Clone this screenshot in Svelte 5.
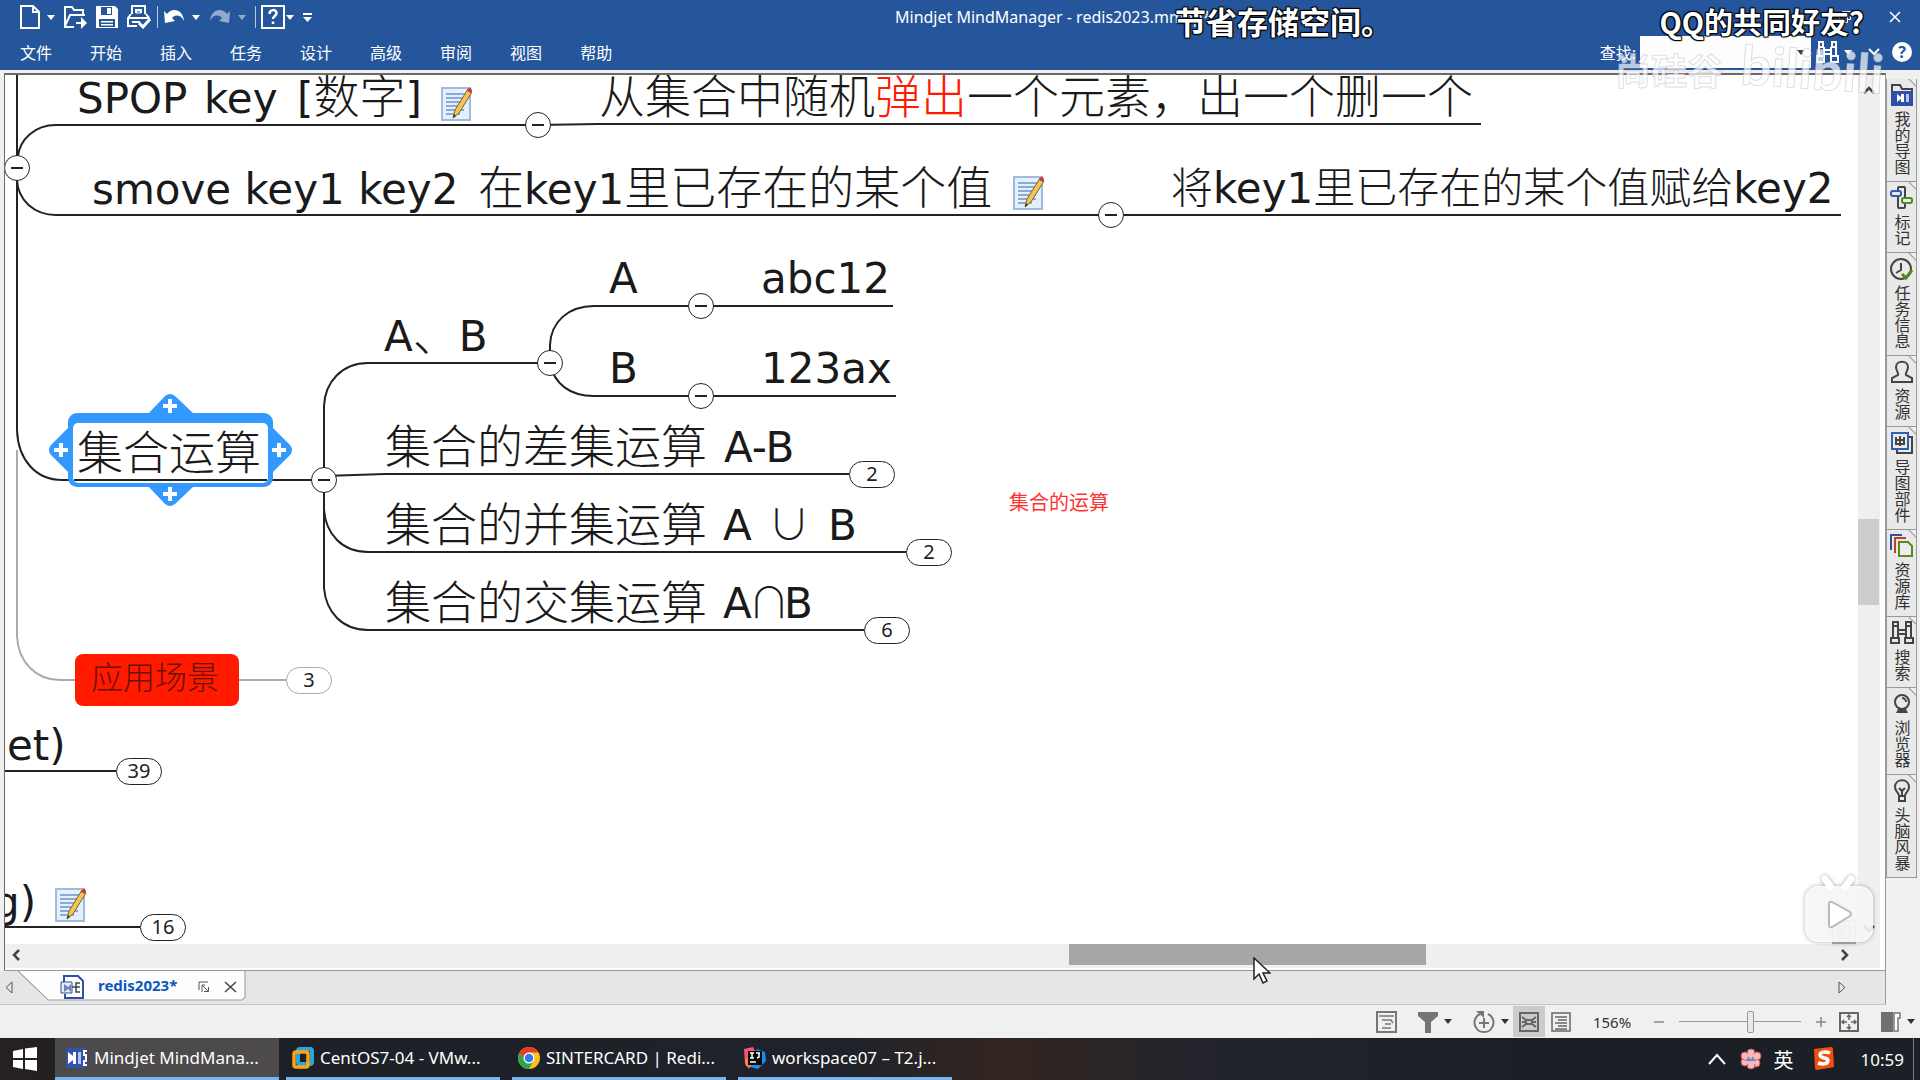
<script>
  const menus = ['文件', '开始', '插入', '任务', '设计', '高级', '审阅', '视图', '帮助'];

  const texts = [
    { x: 77, y: 113, t: 'SPOP' },
    { x: 204, y: 113, t: 'key' },
    { x: 297, y: 113, t: '[数字]' },
    { x: 599, y: 113, t: '从集合中随机' },
    { x: 875, y: 113, t: '弹出', red: true },
    { x: 967, y: 113, t: '一个元素，出一个删一个' },
    { x: 92, y: 204, t: 'smove key1 key2' },
    { x: 478, y: 204, t: '在key1里已存在的某个值' },
    { x: 1171, y: 203, t: '将key1里已存在的某个值赋给key2', small: true },
    { x: 609, y: 293, t: 'A' },
    { x: 761, y: 293, t: 'abc12' },
    { x: 384, y: 351, t: 'A、B' },
    { x: 609, y: 383, t: 'B' },
    { x: 761, y: 383, t: '123ax' },
    { x: 385, y: 463, t: '集合的差集运算' },
    { x: 724, y: 462, t: 'A-B' },
    { x: 385, y: 541, t: '集合的并集运算' },
    { x: 723, y: 540, t: 'A' },
    { x: 768, y: 540, t: '∪', small: true },
    { x: 828, y: 540, t: 'B' },
    { x: 385, y: 619, t: '集合的交集运算' },
    { x: 723, y: 618, t: 'A' },
    { x: 748, y: 618, t: '∩', small: true },
    { x: 784, y: 618, t: 'B' },
    { x: 77, y: 469, t: '集合运算' },
    { x: 7, y: 760, t: 'et)' },
    { x: -7, y: 917, t: 'g)' }
  ];

  const toggles = [
    [538, 125], [17, 168], [1111, 215], [701, 306], [550, 363], [701, 396], [324, 480]
  ];
  const pills = [
    { x: 849, y: 461, n: 2 },
    { x: 906, y: 539, n: 2 },
    { x: 864, y: 617, n: 6 },
    { x: 286, y: 667, n: 3, pale: true },
    { x: 116, y: 758, n: 39 },
    { x: 140, y: 914, n: 16 }
  ];
  const notes = [[441, 87], [1013, 176], [55, 888]];

  const panels = [
    { icon: 'folder', t: '我的导图' },
    { icon: 'marker', t: '标记' },
    { icon: 'clock', t: '任务信息' },
    { icon: 'person', t: '资源' },
    { icon: 'parts', t: '导图部件' },
    { icon: 'library', t: '资源库' },
    { icon: 'search', t: '搜索' },
    { icon: 'globe', t: '浏览器' },
    { icon: 'bulb', t: '头脑风暴' }
  ];

  const tasks = [
    { icon: 'mm', t: 'Mindjet MindMana...', active: true },
    { icon: 'vm', t: 'CentOS7-04 - VMw...' },
    { icon: 'chrome', t: 'SINTERCARD | Redi...' },
    { icon: 'ij', t: 'workspace07 – T2.j...' }
  ];

  // Latin and CJK runs use different sizes, so each string is split into runs.
  const runs = (s) =>
    (s.match(/[∪∩\u2E80-\u9FFF\uFF00-\uFFEF]+|[^∪∩\u2E80-\u9FFF\uFF00-\uFFEF]+/g) || []).map((t) => ({
      t,
      cjk: /[∪∩\u2E80-\u9FFF\uFF00-\uFFEF]/.test(t)
    }));

  let zoom = $state(59);
  let query = $state('');
</script>

{#snippet caret()}
  <svg width="8" height="5" viewBox="0 0 8 5" aria-hidden="true"><path d="M0 0h8L4 5z" fill="currentColor" /></svg>
{/snippet}

<div class="app">
  <header class="ribbon">
    <div class="title-row">
      <div class="toolbar">
        <button class="w26" aria-label="新建"><svg width="22" height="24" viewBox="0 0 22 24"><path d="M2 1h12l6 6v16H2zM14 1v6h6" fill="none" stroke="#fff" stroke-width="2" /></svg></button>
        <button class="w16" aria-label="新建选项">{@render caret()}</button>
        <button class="w32" aria-label="打开"><svg width="24" height="24" viewBox="0 0 24 24" fill="none" stroke="#fff" stroke-width="2"><path d="M11 22H2V2h7l2 3h9v5M2 21l5-11h15M13 18h7" /><path d="M18 12l6 6-6 6z" fill="#fff" stroke="none" /></svg></button>
        <button class="w32" aria-label="保存"><svg width="24" height="24" viewBox="0 0 24 24"><path d="M1 1h19l3 3v19H1z" fill="#fff" /><path d="M6 2h11v8H6zM4 14h16v8H4z" fill="#25569c" /><path d="M12 3h4v6h-4zM6 16h12v1.500H6zM6 19h12v1.500H6z" fill="#fff" /></svg></button>
        <button class="w32" aria-label="打印"><svg width="24" height="24" viewBox="0 0 24 24" fill="none" stroke="#fff" stroke-width="2"><path d="M5 9V1h13v8M9 8V5h5v3M4 9L1 13v8h9M19 9l3 4v2M1 13h21M5 17h8" /><path d="M9 5h5v4H9z" fill="#fff" fill-opacity=".5" stroke="none" /><path d="M12 18l4 4 7-8" stroke-width="3" /></svg></button>
        <span class="sep w5"></span>
        <button class="w28" aria-label="撤销"><svg width="22" height="18" viewBox="0 0 22 18"><path d="M1 3l3 3c5-7 16-5 17 7-3-6-8-7-12-3l3 3-10 2z" fill="#fff" /></svg></button>
        <button class="w16" aria-label="撤销选项">{@render caret()}</button>
        <button class="w32 dim" aria-label="恢复"><svg width="22" height="18" viewBox="0 0 22 18"><path d="M21 3l-3 3C13-1 2 1 1 13c3-6 8-7 12-3l-3 3 10 2z" fill="#fff" /></svg></button>
        <button class="w12 dim" aria-label="恢复选项">{@render caret()}</button>
        <span class="sep w14"></span>
        <button class="w22" aria-label="帮助"><svg width="24" height="24" viewBox="0 0 24 24" fill="none" stroke="#fff" stroke-width="2"><path d="M1 1h22v22H1z" /><path d="M8.500 9c0-5 7-5 7-1 0 3-3.500 3-3.500 6M12 16.500v2.500" stroke-width="2.500" /></svg></button>
        <button class="w12" aria-label="帮助选项">{@render caret()}</button>
        <button class="w22" aria-label="自定义"><svg width="9" height="9" viewBox="0 0 9 9"><path d="M0 0h9v2H0zM0 4h9L4.500 9z" fill="#fff" /></svg></button>
      </div>
      <div class="title">Mindjet MindManager - redis2023.mmap*</div>
      <div class="win-buttons">
        <button aria-label="还原"><svg width="12" height="12" viewBox="0 0 12 12" fill="none" stroke="#fff"><path d="M.5 3.500h8v8h-8zM3.500 3V.5h8v8H9" /></svg></button>
        <button aria-label="关闭"><svg width="12" height="12" viewBox="0 0 12 12" stroke="#fff" stroke-width="1.500"><path d="M1 1l10 10M11 1L1 11" /></svg></button>
      </div>
    </div>
    <div class="menu-row">
      <nav>
        {#each menus as m}<button>{m}</button>{/each}
      </nav>
      <div class="find">
        <label for="find">查找:</label>
        <div class="find-box">
          <input id="find" type="text" bind:value={query} />
          <button aria-label="查找历史">{@render caret()}</button>
        </div>
        <button class="w26" aria-label="查找"><svg width="23" height="22" viewBox="0 0 23 22" fill="none" stroke="#fff" stroke-width="2"><path d="M3 1h4v5H3zM16 1h4v5h-4zM3 6v9M8 6v9M15 6v9M20 6v9M8 9h7M8 13h7M1 15h7v6H1zM15 15h7v6h-7z" /></svg></button>
        <button class="w16" aria-label="查找选项">{@render caret()}</button>
        <button class="w36" aria-label="折叠功能区"><svg width="12" height="8" viewBox="0 0 12 8"><path d="M1 1l5 5 5-5" fill="none" stroke="#fff" stroke-width="2" /></svg></button>
        <button class="help" aria-label="联机帮助">?</button>
      </div>
    </div>
  </header>

  <div class="body">
    <main class="workspace">
      <div class="canvas">
        <div class="map">
          <svg class="drawing" width="1900" height="980" viewBox="0 0 1900 980">
            <g class="wire">
              <path d="M17 70V156" stroke-width="3" />
              <path d="M18 156C20 140 34 125 56 125H538L598 124H1481" />
              <path d="M17 180C18 200 34 215 56 215H1841" />
              <path class="pale" d="M17 450V636C18 662 36 680 60 680H286" />
              <path d="M17 180V430C18 460 36 480 62 480H324" />
              <path d="M324 480V406C325 382 342 363 368 363H550" />
              <path d="M324 476L385 474H849" />
              <path d="M324 492V510C326 534 342 552 368 552H906" />
              <path d="M324 492V588C326 612 342 630 368 630H864" />
              <path d="M550 363V345C551 322 568 306 594 306H893" />
              <path d="M550 363C554 384 570 396 594 396H896" />
              <path d="M0 771H116M0 927H140" />
            </g>
            <g class="selection">
              <path d="M148 414L165 396Q170 392 175 396L194 414zM148 486L165 504Q170 508 175 504L194 486zM69 427L51 445Q47 450 51 455L69 473zM272 427L290 445Q294 450 290 455L272 473z" />
              <rect x="68" y="413" width="205" height="74" rx="9" />
              <rect x="73" y="423" width="195" height="60" rx="5" class="inner" />
              <path class="plus" d="M163 406h14M170 399v14M163 494h14M170 487v14M54 450h14M61 443v14M272 450h14M279 443v14" />
              <path class="base" d="M74 480H267" />
            </g>
            <rect x="75" y="654" width="164" height="52" rx="8" class="alert" />
            <text x="91" y="689" class="scene">应用场景</text>
            {#each texts as n}
              <text x={n.x} y={n.y} class:red={n.red} class:small={n.small}>{#each runs(n.t) as r}<tspan class:cjk={r.cjk}>{r.t}</tspan>{/each}</text>
            {/each}
            <text x="1009" y="510" class="caption">集合的运算</text>
            {#each notes as [x, y]}
              <g transform="translate({x} {y})">
                <rect x="1" y="1" width="28" height="32" fill="#e4f0fc" stroke="#9fbbe0" stroke-width="2" />
                <path d="M5 7h20M5 11h20M5 15h18M5 19h18M5 23h18M5 27h14" stroke="#6d93c8" stroke-width="1.500" />
                <path d="M12 31l2-8L27 2l4 3-13 21z" fill="#f3c552" stroke="#7b6232" />
                <path d="M27 2q2-3 4 1l-1 3-4-2z" fill="#c93a3a" />
                <path d="M12 31l1-4 2 2z" fill="#333" />
              </g>
            {/each}
          </svg>
          {#each toggles as [x, y]}
            <button class="toggle" style="left:{x}px;top:{y}px" aria-label="折叠"></button>
          {/each}
          {#each pills as p}
            <button class="pill" class:pale={p.pale} style="left:{p.x}px;top:{p.y}px">{p.n}</button>
          {/each}
        </div>
      </div>
      <div class="vscroll">
        <button aria-label="向上"><svg width="12" height="8" viewBox="0 0 12 8"><path d="M1 7l5-5 5 5" /></svg></button>
        <span class="v-before"></span><span class="v-thumb"></span><span class="v-after"></span>
        <button aria-label="向下"><svg width="12" height="8" viewBox="0 0 12 8"><path d="M1 1l5 5 5-5" /></svg></button>
      </div>
      <div class="hscroll">
        <button aria-label="向左"><svg width="8" height="12" viewBox="0 0 8 12"><path d="M7 1L2 6l5 5" /></svg></button>
        <span class="h-before"></span><span class="h-thumb"></span><span class="h-after"></span>
        <button aria-label="向右"><svg width="8" height="12" viewBox="0 0 8 12"><path d="M1 1l5 5-5 5" /></svg></button>
      </div>
    </main>

    <aside>
      {#each panels as p}
        <button class="panel">
          <svg width="24" height="24" viewBox="0 0 24 24" fill="none" stroke="#444" stroke-width="2">
            {#if p.icon === 'folder'}
              <path d="M2 22V2h8l2 4h10v16z" /><path d="M2 9h20v13H2z" fill="#2f4fa8" stroke="#2f4fa8" /><path d="M7 11l4 3v-3h3v8h-3v-3l-4 3z" fill="#fff" stroke="none" /><path d="M16 11h3v8h-3z" fill="#b9c4e6" stroke="none" />
            {:else if p.icon === 'marker'}
              <rect x="8" y="1" width="7" height="21" rx="1" /><rect x="1" y="5" width="10" height="5" rx="2" stroke="#2f5fb3" fill="#ececec" /><rect x="12" y="12" width="10" height="5" rx="2" stroke="#4b8a1c" fill="#ececec" />
            {:else if p.icon === 'clock'}
              <circle cx="11" cy="12" r="10" /><path d="M11 6v7l-5 3" /><path d="M12 17l4 4 6-8" stroke="#4b8a1c" stroke-width="3" />
            {:else if p.icon === 'person'}
              <path d="M2 22v-4l6-3c1-2-2-4-2-8 0-7 12-7 12 0 0 4-3 6-2 8l6 3v4z" />
            {:else if p.icon === 'parts'}
              <path d="M18 6h4v16H7v-4" /><path d="M2 2h16v16H2z" stroke="#2f5fb3" /><path d="M10 5v10M6 6v7h8V6M6 9h8" />
            {:else if p.icon === 'library'}
              <path d="M1 16V1h11" stroke="#2f4fa8" /><path d="M5 19V4h11" stroke="#c8401f" /><path d="M9 8h9l4 4v10H9z" stroke="#5a8a1c" fill="#ececec" />
            {:else if p.icon === 'search'}
              <path d="M3 1h5v4H3zM16 1h5v4h-5zM3 5v12M8 5v12M16 5v12M21 5v12M8 9h8M8 13h8M1 17h8v5H1zM15 17h8v5h-8z" />
            {:else if p.icon === 'globe'}
              <circle cx="12" cy="10" r="7" /><path d="M12 6a4 4 0 0 1 4 4" /><path d="M8 17h8l2 4H6z" fill="#444" stroke="none" />
            {:else}
              <path d="M9 17c0-4-4-4-4-9 0-9 14-9 14 0 0 5-4 5-4 9zM9 17v5h6v-5M9 9l3 3 3-3M12 12v5" />
            {/if}
          </svg>
          <span>{p.t}</span>
        </button>
      {/each}
    </aside>

    <div class="doc-tabs">
      <button class="step" aria-label="上一个"><svg width="8" height="13" viewBox="0 0 8 13"><path d="M7 1v11L1 6.500z" fill="none" stroke="#555" /></svg></button>
      <div class="doc-tab">
        <svg class="doc-shape" viewBox="0 0 226 32" preserveAspectRatio="none" aria-hidden="true"><path d="M0 0L30 30H222L225 27V0" fill="#fdfdfd" stroke="#999" /></svg>
        <svg class="doc-icon" width="24" height="24" viewBox="0 0 24 24" fill="none"><path d="M4 17V1h14l5 5v17H5v-4" stroke="#2f4fa8" stroke-width="2" fill="#fff" /><path d="M1 7h11v11H1z" fill="#e6ebf8" stroke="#2f4fa8" /><path d="M4 9l4 3 3-3v8l-3-3-4 3z" fill="#7181b5" /><path d="M12 12h4M20 8h-4v9h4M16 12h4" stroke="#444" stroke-width="1.500" /></svg>
        <b>redis2023*</b>
        <button aria-label="还原窗口"><svg width="12" height="12" viewBox="0 0 12 12" fill="none" stroke="#555"><path d="M1 9V1h9M4 11V4h3M5 5l5 5M10.500 6v4.500H6" /></svg></button>
        <button aria-label="关闭文档"><svg width="13" height="12" viewBox="0 0 13 12" stroke="#444" stroke-width="1.500"><path d="M1 1l11 10M12 1L1 11" /></svg></button>
      </div>
      <button class="step last" aria-label="下一个"><svg width="8" height="13" viewBox="0 0 8 13"><path d="M1 1v11l6-5.500z" fill="none" stroke="#555" /></svg></button>
    </div>
  </div>

  <footer class="status">
    <button class="w36 summary" aria-label="摘要"><svg width="21" height="22" viewBox="0 0 21 22" fill="none" stroke="#777" stroke-width="2"><path d="M1 1h19v20H1z" /><path d="M3 5h15M6 9h9l2 3M9 13h6M6 17h9" stroke-width="1.500" /></svg></button>
    <button class="w44" aria-label="筛选"><svg width="20" height="22" viewBox="0 0 20 22"><path d="M0 1h20v4l-7 6v11H7V11L0 5z" fill="#757575" /></svg>{@render caret()}</button>
    <button class="w44 grow" aria-label="展开"><svg width="22" height="24" viewBox="0 0 22 24" fill="none" stroke="#757575" stroke-width="2"><path d="M7 4a9.500 9.500 0 1 0 8 0M11 8v10M6 13h10" /><path d="M3 1h8v7z" fill="#757575" stroke="none" /></svg>{@render caret()}</button>
    <button class="w32 on" aria-label="导图视图"><svg width="20" height="20" viewBox="0 0 20 20" fill="none" stroke="#666" stroke-width="2"><path d="M1 1h18v18H1zM3 5l4 3h6l4-3M3 15l4-3h6l4 3M3 10h3M14 10h3M7 8v4M13 8v4" /></svg></button>
    <button class="w32" aria-label="大纲视图"><svg width="20" height="20" viewBox="0 0 20 20" fill="none" stroke="#666" stroke-width="1.500"><path d="M1 1h18v18H1zM4 5h12M7 8h9M4 11h12M7 14h9M4 17h12" /></svg></button>
    <span class="percent">156%</span>
    <button class="w24" aria-label="缩小"><svg width="10" height="10" viewBox="0 0 10 10"><path d="M0 5h10" stroke="#888" stroke-width="1.500" /></svg></button>
    <input type="range" aria-label="缩放" min="0" max="100" bind:value={zoom} />
    <button class="w24" aria-label="放大"><svg width="10" height="10" viewBox="0 0 10 10"><path d="M0 5h10M5 0v10" stroke="#888" stroke-width="1.500" /></svg></button>
    <button class="w32" aria-label="适合窗口"><svg width="20" height="20" viewBox="0 0 20 20" fill="none" stroke="#666" stroke-width="2"><path d="M1 1h18v18H1z" /><path d="M10 3v5M10 12v5M3 10h5M12 10h5M8 5l2-2 2 2M8 15l2 2 2-2M5 8l-2 2 2 2M15 8l2 2-2 2" stroke-width="1.500" /></svg></button>
    <button class="w44 pane" aria-label="任务窗格"><svg width="20" height="20" viewBox="0 0 20 20"><path d="M0 0h12v20H0z" fill="#707070" /><path d="M13 1h6v5h-2v13h-4z" fill="#fff" stroke="#777" stroke-width="1.500" /></svg>{@render caret()}</button>
  </footer>

  <div class="taskbar">
    <button class="start" aria-label="开始"><svg width="24" height="24" viewBox="0 0 24 24" fill="#fff"><path d="M0 4l10-2v9H0zM12 1.500L24 0v11H12zM0 13h10v9L0 20zM12 13h12v11l-12-2z" /></svg></button>
    {#each tasks as k}
      <button class="task" class:active={k.active}>
        <svg width="24" height="24" viewBox="0 0 24 24">
          {#if k.icon === 'mm'}
            <path d="M1 2h20v20H1z" fill="#3551a8" /><path d="M3 6l5 4V6h3v12H8v-4l-5 4z" fill="#fff" /><path d="M13 6h3v12h-3z" fill="#b7c4ea" /><path d="M22 5h-3v4h2v6h-2v4h3" fill="none" stroke="#fff" stroke-width="2" />
          {:else if k.icon === 'vm'}
            <rect x="7" y="3" width="14" height="15" rx="2" fill="none" stroke="#2ba6d8" stroke-width="4" /><rect x="3" y="6" width="14" height="15" rx="2" fill="none" stroke="#f9a51b" stroke-width="3.500" />
          {:else if k.icon === 'chrome'}
            <circle cx="12" cy="12" r="11" fill="#fbc116" /><path d="M2.500 6.500A11 11 0 0 1 21.500 6.500H12L7.500 14z" fill="#e33b2e" /><path d="M2.500 6.500A11 11 0 0 0 12 23l4.500-8.500H7.500z" fill="#2da44e" /><circle cx="12" cy="12" r="5.500" fill="#fff" /><circle cx="12" cy="12" r="4.300" fill="#2f7de9" />
          {:else}
            <path d="M1 3l9-2 4 8-8 14-4-5z" fill="#fb4f7d" /><path d="M14 3l8 3 1 9-8 8-8-2z" fill="#1c8bf0" /><path d="M2 14l5-4 1 11-5-1z" fill="#f7902a" /><rect x="5" y="5" width="14" height="14" fill="#0a0a0a" /><path d="M7 7h4M9 7v5M7 12h4M13 7h4M16 7v4l-2 1M7 16h6" fill="none" stroke="#fff" stroke-width="1.500" />
          {/if}
        </svg>
        <span>{k.t}</span>
      </button>
    {/each}
    <div class="tray">
      <svg width="18" height="12" viewBox="0 0 18 12"><path d="M1 11l8-9 8 9" fill="none" stroke="#fff" stroke-width="2" /></svg>
      <svg class="flower" width="22" height="22" viewBox="0 0 22 22"><g fill="#f7b9b9" stroke="#cf4f55"><circle cx="11" cy="5" r="4" /><circle cx="17" cy="8" r="4" /><circle cx="16" cy="15" r="4" /><circle cx="11" cy="17" r="4" /><circle cx="5" cy="14" r="4" /><circle cx="5" cy="8" r="4" /></g><circle cx="11" cy="11" r="6" fill="#f7b9b9" /><path d="M6 12h10M8 9l2 4M13 9l-1 4" stroke="#6c8fc0" stroke-width="2" /></svg>
      <span class="ime">英</span>
      <svg class="sogou" width="24" height="26" viewBox="0 0 24 26"><path d="M2 3l17-2q2 0 2 2l1 18-17 3q-2 0-2-2z" fill="#f0500f" /><path d="M18 7c-5-2-10-1-10 2 0 4 9 2 8 6-1 4-7 3-10 2" fill="none" stroke="#fff" stroke-width="3.500" /></svg>
      <time>10:59</time>
      <span class="peek"></span>
    </div>
  </div>

  <p class="danmaku one">节省存储空间。</p>
  <p class="danmaku two">QQ的共同好友?</p>
  <div class="mark"><span class="school">尚硅谷</span><span class="site">bilibili</span></div>
  <svg class="tv" width="76" height="76" viewBox="0 0 76 76">
    <g opacity=".6" fill="none" stroke="#777" stroke-width="2"><path d="M33 49h22v22H33zM38 54h12v12H38zM41 63v-6h6M41 57l7 7" /></g>
    <path d="M25 7l6 8M51 7l-6 8" stroke="#fff" stroke-width="7" stroke-linecap="round" />
    <rect x="5" y="14" width="68" height="56" rx="13" fill="#fff" fill-opacity=".88" />
    <path d="M29 32q0-3 3-2l18 10q2 2 0 4L32 55q-3 1-3-2z" fill="#fff" stroke="#bbb" stroke-width="2" />
  </svg>
  <svg class="pointer" width="18" height="28" viewBox="0 0 18 28"><path d="M1 1v21l5-5 4 9 4-2-4-8h7z" fill="#fff" stroke="#222" stroke-width="1.500" /></svg>
</div>

<style>
  :global(body) {
    margin: 0;
    background: #f0f0f0;
  }
  .app {
    position: relative;
    display: flex;
    flex-direction: column;
    min-height: 100vh;
    overflow: hidden;
    font-family: 'Noto Sans', 'Noto Sans CJK SC', sans-serif;
    font-size: 16px;
    color: #222;
  }
  button {
    display: flex;
    align-items: center;
    justify-content: center;
    flex: none;
    padding: 0;
    border: 0;
    background: none;
    color: inherit;
    font: inherit;
  }
  svg {
    display: block;
    flex: none;
  }
  .w5 { width: 5px; }
  .w12 { width: 12px; }
  .w14 { width: 14px; }
  .w16 { width: 16px; }
  .w22 { width: 22px; }
  .w24 { width: 24px; }
  .w26 { width: 26px; }
  .w28 { width: 28px; }
  .w32 { width: 32px; }
  .w36 { width: 36px; }
  .w44 { width: 44px; gap: 6px; }

  .ribbon {
    height: 70px;
    background: #25569c;
    color: #fff;
  }
  .title-row {
    display: flex;
    align-items: center;
    height: 34px;
  }
  .toolbar {
    display: flex;
    align-items: center;
    box-sizing: border-box;
    height: 30px;
    width: 895px;
    padding-left: 17px;
  }
  .dim { opacity: .5; }
  .sep {
    display: flex;
    justify-content: center;
  }
  .sep::before {
    content: '';
    width: 1px;
    height: 22px;
    background: #b5c6e0;
  }
  .title {
    flex: 1;
    line-height: 34px;
    white-space: nowrap;
  }
  .win-buttons {
    display: flex;
  }
  .win-buttons button {
    width: 50px;
    height: 34px;
  }
  .menu-row {
    display: flex;
    justify-content: space-between;
    align-items: center;
    height: 36px;
  }
  nav {
    display: flex;
    gap: 38px;
    padding-left: 20px;
  }
  .find {
    display: flex;
    align-items: center;
    padding-right: 8px;
  }
  .find-box {
    display: flex;
    width: 171px;
    height: 32px;
    margin: 0 3px 0 4px;
    background: #fdfdfd;
    color: #444;
  }
  .find input {
    flex: 1;
    min-width: 0;
    padding: 0 6px;
    border: 0;
    background: none;
    font: inherit;
  }
  .find-box button { width: 20px; }
  .help {
    width: 20px;
    height: 20px;
    border-radius: 50%;
    background: #fff;
    color: #25569c;
    font-weight: 700;
  }

  .body {
    flex: 1;
    display: grid;
    grid-template-columns: 1fr 34px;
    grid-template-rows: 1fr 34px;
    background: #f0f0f0;
  }
  .workspace {
    display: grid;
    grid-template-columns: 1fr 22px;
    grid-template-rows: 1fr 24px;
    margin: 3px 0 0 4px;
    padding: 0 5px 2px 0;
    border: 1px solid;
    border-width: 2px 1px 1px 1px;
    border-color: #6d6969 #999 #999 #6d6969;
    background: #fff;
  }
  .canvas {
    position: relative;
    overflow: hidden;
    background: #fff;
  }
  .map {
    position: absolute;
    left: -5px;
    top: -75px;
  }
  .drawing text {
    font: 42px 'DejaVu Sans', sans-serif;
    fill: #1a1a1a;
  }
  .drawing .cjk {
    font: 300 46px 'Noto Sans CJK SC', sans-serif;
  }
  .drawing .small .cjk {
    font-size: 42px;
  }
  .drawing .red { fill: #ff1a00; }
  .drawing .scene {
    font: 300 32px 'Noto Sans CJK SC', sans-serif;
    fill: #6b1208;
  }
  .drawing .caption {
    font: 20px 'Noto Sans CJK SC', sans-serif;
    fill: #ff3333;
  }
  .wire path {
    fill: none;
    stroke: #222;
    stroke-width: 2;
  }
  .wire .pale { stroke: #aaa; }
  .selection { fill: #3399ff; }
  .selection .inner { fill: #fff; }
  .selection .plus { stroke: #fff; stroke-width: 4; }
  .selection .base { stroke: #222; stroke-width: 2; }
  .alert { fill: #ff1a00; }
  .toggle {
    position: absolute;
    box-sizing: border-box;
    width: 26px;
    height: 26px;
    margin: -13px 0 0 -13px;
    border: 1px solid #222;
    border-radius: 50%;
    background: #fff;
  }
  .toggle::before {
    content: '';
    width: 12px;
    height: 2px;
    background: #222;
  }
  .pill {
    position: absolute;
    box-sizing: border-box;
    width: 46px;
    height: 27px;
    padding-bottom: 2px;
    border: 1px solid #222;
    border-radius: 14px;
    background: #fff;
    font-size: 20px;
    line-height: 24px;
  }
  .pill.pale { border-color: #aaa; }

  .vscroll,
  .hscroll {
    display: flex;
    background: #efefef;
  }
  .vscroll { flex-direction: column; }
  .hscroll { grid-column: 1 / 3; padding-right: 24px; }
  .vscroll button { height: 30px; }
  .hscroll button { width: 22px; height: 21px; }
  .vscroll path,
  .hscroll path {
    fill: none;
    stroke: #444;
    stroke-width: 2.5;
  }
  .v-before { flex: 415; }
  .v-thumb { flex: 86; margin-right: 1px; background: #cdcdcd; }
  .v-after { flex: 309; }
  .h-before { flex: 1042; }
  .h-thumb { flex: 357; margin-bottom: 3px; background: #a6a6a6; }
  .h-after { flex: 408; }

  aside {
    grid-row: 1 / 3;
    grid-column: 2;
    padding: 9px 2px 0 0;
  }
  .panel {
    box-sizing: border-box;
    flex-direction: column;
    justify-content: flex-start;
    width: 31px;
    padding: 4px 3px 6px;
    gap: 4px;
    border: 1px solid #999;
    border-width: 0 1px 1px;
    background: linear-gradient(225deg, #f0f0f0 0 4px, #999 5px, #e9e9e9 6px);
  }
  .panel span {
    writing-mode: vertical-rl;
    text-orientation: upright;
    line-height: 20px;
    color: #333;
  }

  .doc-tabs {
    grid-row: 2;
    grid-column: 1;
    display: flex;
    align-items: stretch;
    border-bottom: 1px solid #c4c4c4;
    border-right: 1px solid #999;
    background: #e6e6e6;
  }
  .step { width: 18px; }
  .last { margin-left: auto; margin-right: 34px; }
  .doc-tab {
    position: relative;
    display: flex;
    align-items: center;
    box-sizing: border-box;
    width: 228px;
    height: 31px;
    padding-left: 42px;
    color: #0a58c0;
    font-size: 15px;
  }
  .doc-shape {
    position: absolute;
    inset: 0;
    width: 100%;
    height: 100%;
  }
  .doc-icon,
  .doc-tab b,
  .doc-tab button {
    position: relative;
  }
  .doc-tab b { margin: 0 10px 0 14px; flex: 1; line-height: 18px; padding-bottom: 4px; }
  .doc-tab button { width: 26px; }
  .doc-tab button:last-child { margin-right: 3px; }

  .status {
    display: flex;
    align-items: center;
    justify-content: flex-end;
    height: 33px;
    color: #333;
    background: #f0f0f0;
  }
  .summary { margin-right: 9px; }
  .status .grow { margin-left: 12px; }
  .status .on { height: 31px; background: #cbcbcb; }
  .percent {
    width: 70px;
    text-align: center;
    font-size: 15px;
  }
  input[type='range'] {
    appearance: none;
    width: 122px;
    height: 22px;
    margin: 0 8px;
    background: linear-gradient(#999, #999) center / 100% 1px no-repeat;
  }
  input[type='range']::-webkit-slider-thumb {
    appearance: none;
    width: 7px;
    height: 22px;
    border: 1px solid #999;
    border-radius: 2px;
    background: #e8e8e8;
  }
  .pane { margin-left: 11px; }

  .taskbar {
    display: flex;
    height: 42px;
    background: linear-gradient(90deg, #262020, #1e2026 8%, #1f222a 44%, #33251f 52%, #23242b 62%, #1b1f26 80%);
    color: #fff;
  }
  .start { box-sizing: border-box; width: 55px; padding-right: 6px; }
  .task {
    box-sizing: border-box;
    justify-content: flex-start;
    width: 214px;
    margin-right: 12px;
    padding-left: 5px;
    gap: 5px;
    border-bottom: 3px solid #76b5f0;
    font-size: 17px;
    white-space: nowrap;
  }
  .task.active {
    width: 224px;
    margin-right: 7px;
    padding-left: 10px;
    background: #4c4a4b;
  }
  .tray {
    display: flex;
    align-items: center;
    margin-left: auto;
  }
  .flower { margin-left: 14px; }
  .ime { margin-left: 12px; font-size: 20px; }
  .sogou { margin: 0 25px 0 18px; }
  .tray time { font-size: 17px; }
  .peek {
    width: 1px;
    align-self: stretch;
    margin: 0 6px 0 9px;
    background: #777;
  }

  .danmaku {
    position: absolute;
    top: 1px;
    margin: 0;
    color: #fff;
    font: 700 29px/40px 'Noto Sans CJK SC', sans-serif;
    white-space: nowrap;
    text-shadow: 1px 1px 1px #000, -1px -1px 1px #000, 1px -1px 1px #000, -1px 1px 1px #000;
  }
  .one { left: 1175px; font-size: 31px; }
  .two { right: 56px; }
  .mark {
    position: absolute;
    top: 36px;
    right: 36px;
    display: flex;
    gap: 18px;
    color: rgba(255, 255, 255, .7);
    font: 700 36px/66px 'Noto Sans CJK SC', sans-serif;
    -webkit-text-stroke: 1px rgba(190, 190, 200, .5);
    pointer-events: none;
  }
  .site {
    font-family: Lato, sans-serif;
    font-size: 54px;
    transform: rotate(4deg);
  }
  .tv {
    position: absolute;
    right: 44px;
    bottom: 132px;
    filter: drop-shadow(0 0 2px rgba(0, 0, 0, .35));
  }
  .pointer {
    position: absolute;
    left: 1253px;
    top: 957px;
  }
</style>
